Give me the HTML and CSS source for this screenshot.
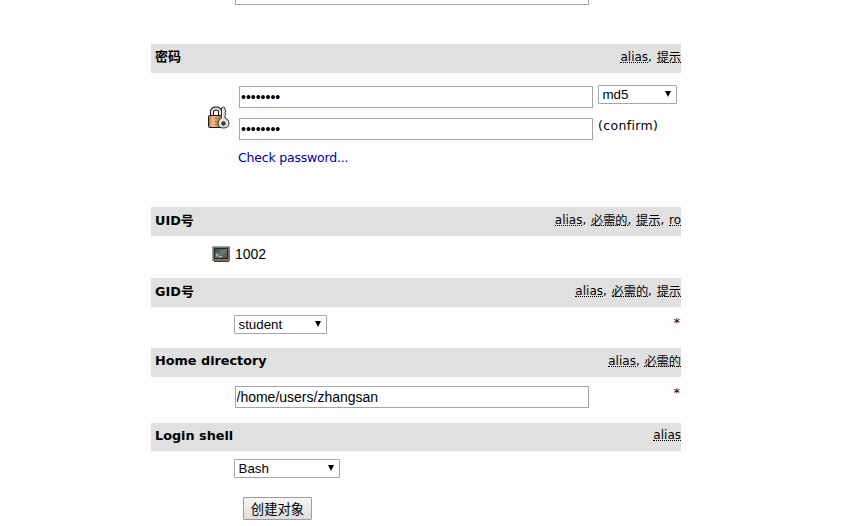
FILE: index.html
```html
<!DOCTYPE html>
<html lang="zh-CN">
<head>
<meta charset="utf-8">
<title>创建对象</title>
<link rel="stylesheet" href="styles.css">
</head>
<body>
<form class="entry">
  <div class="previous"><input class="field" type="text"></div>

  <section class="attr attr-password">
    <header class="bar"><b class="name cjk">密码</b><span class="notes"><abbr>alias</abbr>, <abbr class="zh">提示</abbr></span></header>
    <div class="password">
      <svg class="lock" width="24" height="24" viewBox="0 0 24 24">
        <defs><linearGradient id="brass"><stop offset="0" stop-color="#b96d3d"/><stop offset=".3" stop-color="#f4bd8b"/><stop offset="1" stop-color="#a86235"/></linearGradient></defs>
        <path d="M5 10V6Q5 2.500 9 2.500T13 6v4" fill="none" stroke="#161616" stroke-width="4"/>
        <path d="M5 10V6Q5 2.500 9 2.500T13 6v4" fill="none" stroke="#e1e3df" stroke-width="2"/>
        <rect x="1.500" y="9.500" width="14" height="12" rx="1" fill="url(#brass)" stroke="#151515"/>
        <path d="M8 12.500h6M8 15.500h6M8 18.500h6" stroke="#a76338" stroke-width=".7"/>
        <path d="M14.500 2Q16.500 0 18 2v2l1 1-1 1.500 1 1.500-1 1.500v2.500Q22 13.500 22 17q0 5-5.500 5T11 17q0-3 3.500-5z" fill="#dedfdb" stroke="#353535"/>
        <path d="M15.500 3v10" stroke="#fff"/>
        <circle cx="16.500" cy="17.500" r="1.700" fill="#5a4435" stroke="#111"/>
      </svg>
      <div class="secrets">
        <input class="field" type="password" value="zhangsan">
        <input class="field" type="password" value="zhangsan">
        <a class="check">Check password...</a>
      </div>
      <div class="options">
        <span class="select md5"><select><option>md5</option></select></span>
        <span class="confirm">(confirm)</span>
      </div>
    </div>
  </section>

  <section class="attr attr-uid">
    <header class="bar"><b class="name">UID<span class="cjk">号</span></b><span class="notes"><abbr>alias</abbr>, <abbr class="zh">必需的</abbr>, <abbr class="zh">提示</abbr>, <abbr>ro</abbr></span></header>
    <div class="uid">
      <svg width="18" height="16" viewBox="0 0 18 16">
        <defs><linearGradient id="screen" x2="1" y2="1"><stop stop-color="#39433f"/><stop offset=".5" stop-color="#6b7875"/><stop offset="1" stop-color="#3d4945"/></linearGradient></defs>
        <path d="M0 0h18v15h-1v1H2v-1H0z" fill="#777168"/>
        <path d="M0 .5h18M.5 0v14" stroke="#aaa59b"/>
        <path d="M2 15.500h15" stroke="#3f3b35"/>
        <rect x="2.500" y="2.500" width="13" height="10" fill="url(#screen)" stroke="#252a27"/>
        <path d="M4 8l2 1-2 1M7 10.500h3" fill="none" stroke="#d3d9d6" stroke-width=".8"/>
      </svg>
      <input class="readonly" type="text" value="1002" readonly>
    </div>
  </section>

  <section class="attr attr-gid">
    <header class="bar"><b class="name">GID<span class="cjk">号</span></b><span class="notes"><abbr>alias</abbr>, <abbr class="zh">必需的</abbr>, <abbr class="zh">提示</abbr></span></header>
    <div class="value"><span class="select group"><select><option>student</option></select></span><span class="star">*</span></div>
  </section>

  <section class="attr attr-home">
    <header class="bar"><b class="name">Home directory</b><span class="notes"><abbr>alias</abbr>, <abbr class="zh">必需的</abbr></span></header>
    <div class="value home"><input class="field" type="text" value="/home/users/zhangsan"><span class="star">*</span></div>
  </section>

  <section class="attr attr-shell">
    <header class="bar short"><b class="name">Login shell</b><span class="notes"><abbr>alias</abbr></span></header>
    <div class="value"><span class="select shell"><select><option>Bash</option></select></span></div>
  </section>

  <button class="create" type="button">创建对象</button>
</form>
</body>
</html>
```

FILE: styles.css
```css
* { box-sizing: border-box; }
body {
  margin: 0;
  height: 526px;
  overflow: hidden;
  background: #fdfdff;
  color: #000;
  font: 12.500px/16px "DejaVu Sans", "Noto Sans CJK SC", sans-serif;
}
.entry { width: 530px; margin-left: 151px; }
.previous { display: flow-root; height: 44px; padding-left: 84px; }
.previous .field { margin-top: -17px; }
.field {
  display: block;
  width: 354px;
  height: 22px;
  padding: 0 1px 0 .5px;
  border: 1px solid #a5a5a5;
  background: #fff;
  color: #000;
  font: 14px "Liberation Sans", sans-serif;
}
.field[type="password"] { padding-left: 1px; }
.bar {
  display: flex;
  justify-content: space-between;
  height: 29px;
  padding: 4px 0 0 4px;
  background: #e0e0e0;
}
.bar.short { height: 28px; }
.bar.short abbr { height: 14px; line-height: 16px; }
.name { font-size: 12.800px; line-height: 17px; }
.name.cjk { line-height: 16px; }
.cjk { font-family: "Noto Sans CJK SC", sans-serif; font-size: 13px; }
.notes { height: 15px; line-height: 18px; font-size: 12px; white-space: pre; word-spacing: .9px; }
.notes abbr { display: inline-block; height: 15px; border-bottom: 1px dotted #000; vertical-align: top; }
.notes .zh { font-family: "Noto Sans CJK SC", sans-serif; font-size: 12.200px; }
.attr-password { height: 163px; }
.attr-uid { height: 71px; }
.attr-gid { height: 70px; }
.attr-home { height: 75px; }
.attr-shell { height: 74px; }
.password { display: flex; padding: 12px 0 0 56px; }
.lock { margin-top: 21px; }
.secrets { width: 354px; margin: 1px 5px 0 8px; }
.secrets .field + .field { margin-top: 10px; }
.check { display: block; margin: 10px 0 0 -1px; color: #00009c; letter-spacing: -.2px; }
.select { position: relative; display: block; height: 19px; }
.select select {
  appearance: none;
  display: block;
  width: 100%;
  height: 100%;
  padding: 0 3.500px;
  border: 1px solid #a6a6a6;
  border-radius: 1px;
  background: #fff;
  color: #000;
  font: 13.333px "Liberation Sans", sans-serif;
}
.select::after {
  content: "";
  position: absolute;
  top: 6px;
  right: 6.500px;
  border: solid transparent;
  border-width: 6px 3.500px 0;
  border-top-color: #000;
}
.md5 { width: 79px; }
.confirm { display: block; margin-top: 14px; letter-spacing: .35px; }
.uid { display: flex; align-items: flex-start; padding: 9px 0 0 61px; }
.uid svg { margin-top: 1px; }
.readonly {
  width: 350px;
  height: 18px;
  margin-left: 4px;
  padding: 0 0 0 1px;
  border: 0;
  background: #fff;
  font: 14px "Liberation Sans", sans-serif;
}
.value { display: flex; justify-content: space-between; padding: 8px 0 0 83px; }
.star { font-size: 13px; margin-right: 1px; }
.home { padding: 9px 0 0 84px; }
.home .star { margin-top: -1px; }
.group { width: 93px; }
.shell { width: 106px; }
.create {
  display: block;
  width: 69px;
  height: 23px;
  margin-left: 92px;
  padding: 0;
  border: 1px solid #9d9d9d;
  border-radius: 1px;
  background: linear-gradient(#f6f6f6, #dedede);
  color: #000;
  font: 13.333px/20px "Noto Sans CJK SC", sans-serif;
}
```
